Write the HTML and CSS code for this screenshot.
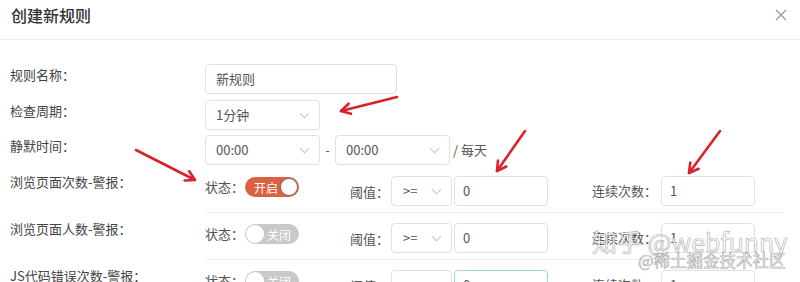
FILE: index.html
```html
<!DOCTYPE html>
<html lang="zh-CN">
  <head>
    <meta charset="UTF-8" />
    <meta name="viewport" content="width=device-width, initial-scale=1.0" />
    <title>创建新规则</title>
    <link rel="stylesheet" href="styles.css">
  </head>
  <body>
    <div class="modal">
      <div class="modal-header">
        <span class="modal-title">创建新规则</span>
        <span class="modal-close">
          <svg width="12" height="12" viewBox="0 0 12 12">
            <path d="M1 1 L11 11 M11 1 L1 11" stroke="#999" stroke-width="1.3" fill="none" />
          </svg>
        </span>
      </div>

      <div class="modal-body">
        <div class="form-row row-gap-6">
          <div class="form-label">规则名称：</div>
          <div class="input input-name">新规则</div>
        </div>

        <div class="form-row row-gap-5">
          <div class="form-label">检查周期：</div>
          <div class="select select-wide">1分钟<span class="chevron"></span></div>
        </div>

        <div class="form-row row-gap-6">
          <div class="form-label">静默时间：</div>
          <div class="select select-wide">00:00<span class="chevron"></span></div>
          <span class="dash">-</span>
          <div class="select select-wide">00:00<span class="chevron"></span></div>
          <span class="per-day">/ 每天</span>
        </div>

        <div class="alert-row">
          <div class="form-label">浏览页面次数-警报：</div>
          <div class="alert-content">
            <div class="status-group">
              <span class="sub-label">状态：</span>
              <span class="switch switch-on"><span class="switch-text">开启</span><span class="knob"></span></span>
            </div>
            <span class="sub-label thresh-label">阈值：</span>
            <div class="select select-op">&gt;=<span class="chevron"></span></div>
            <div class="input input-num">0</div>
            <span class="sub-label count-label">连续次数：</span>
            <div class="input input-num">1</div>
          </div>
        </div>

        <div class="alert-row">
          <div class="form-label">浏览页面人数-警报：</div>
          <div class="alert-content">
            <div class="status-group">
              <span class="sub-label">状态：</span>
              <span class="switch switch-off"><span class="knob"></span><span class="switch-text">关闭</span></span>
            </div>
            <span class="sub-label thresh-label">阈值：</span>
            <div class="select select-op">&gt;=<span class="chevron"></span></div>
            <div class="input input-num">0</div>
            <span class="sub-label count-label">连续次数：</span>
            <div class="input input-num">1</div>
          </div>
        </div>

        <div class="alert-row">
          <div class="form-label">JS代码错误次数-警报：</div>
          <div class="alert-content">
            <div class="status-group">
              <span class="sub-label">状态：</span>
              <span class="switch switch-off"><span class="knob"></span><span class="switch-text">关闭</span></span>
            </div>
            <span class="sub-label thresh-label">阈值：</span>
            <div class="select select-op">&gt;=<span class="chevron"></span></div>
            <div class="input input-num input-focus">0</div>
            <span class="sub-label count-label">连续次数：</span>
            <div class="input input-num">1</div>
          </div>
        </div>
      </div>
    </div>

    <!-- red annotation arrows drawn over the form -->
    <svg class="arrows" width="800" height="282" viewBox="0 0 800 282">
      <defs>
        <marker id="head" viewBox="0 0 10 10" refX="8" refY="5" markerWidth="5" markerHeight="5" orient="auto">
          <path d="M1 1 L8 5 L1 9" fill="none" stroke="#d8222c" stroke-width="2" stroke-linecap="round" stroke-linejoin="round" />
        </marker>
      </defs>
      <g stroke="#d8222c" stroke-width="2.6" stroke-linecap="round" fill="none" marker-end="url(#head)">
        <line x1="397" y1="97" x2="341" y2="111" />
        <line x1="136" y1="150" x2="195" y2="180" />
        <line x1="525" y1="131" x2="497" y2="171" />
        <line x1="720" y1="131" x2="689" y2="173" />
      </g>
    </svg>

    <div class="watermark">
      <div class="wm-main">知乎 @webfunny</div>
      <div class="wm-sub">@稀土掘金技术社区</div>
    </div>
  </body>
</html>
```

FILE: styles.css
```css
body {
  margin: 0;
  background: #fff;
  font-family: "Noto Sans CJK SC", "Noto Sans", sans-serif;
  font-size: 13px;
  color: #444;
  overflow: hidden;
}
.modal {
  width: 800px;
  height: 282px;
  overflow: hidden;
}
.modal-header {
  height: 40px;
  box-sizing: border-box;
  border-bottom: 1px solid #ececec;
  display: flex;
  justify-content: space-between;
  padding: 0 13px 0 11px;
}
.modal-title {
  font-size: 16px;
  font-weight: 500;
  line-height: 30px;
  color: #333;
}
.modal-close {
  display: flex;
  align-items: center;
  height: 30px;
}
.modal-body {
  padding: 24px 17px 0 10px;
}
.form-row {
  display: flex;
  align-items: flex-start;
}
.row-gap-6 {
  margin-bottom: 6px;
}
.row-gap-5 {
  margin-bottom: 5px;
}
.form-label {
  width: 195px;
  flex: none;
  line-height: 22px;
  color: #444;
}
.input,
.select {
  box-sizing: border-box;
  height: 30px;
  border: 1px solid #dfe1e5;
  border-radius: 4px;
  line-height: 28px;
  padding: 0 10px;
  color: #555;
  background: #fff;
  flex: none;
}
.input-name {
  width: 192px;
}
.select {
  position: relative;
}
.select-wide {
  width: 115px;
}
.chevron {
  position: absolute;
  right: 11px;
  top: 9px;
  width: 6px;
  height: 6px;
  border-right: 1px solid #c3c6cc;
  border-bottom: 1px solid #c3c6cc;
  transform: rotate(45deg);
}
.dash {
  width: 15px;
  text-align: center;
  line-height: 30px;
  color: #666;
}
.per-day {
  margin-left: 3px;
  line-height: 30px;
  color: #555;
}
.alert-row {
  display: flex;
  align-items: flex-start;
  margin-top: 5px;
}
.alert-row:first-of-type {
  margin-top: 0;
}
.alert-content {
  flex: 1;
  display: flex;
  align-items: center;
  padding: 5px 0 6px;
  border-bottom: 1px solid #efefef;
}
.status-group {
  width: 145px;
  flex: none;
  display: flex;
  align-items: center;
  align-self: flex-start;
  margin-top: 1px;
}
.sub-label {
  color: #555;
  line-height: 20px;
}
.switch {
  margin-left: 1px;
  width: 54px;
  height: 20px;
  border-radius: 10px;
  box-sizing: border-box;
  display: flex;
  align-items: center;
  justify-content: space-between;
  padding: 0 1px;
  font-size: 12px;
  color: #fff;
}
.switch-on {
  background: #dc6143;
  padding-left: 9px;
}
.switch-off {
  background: #c9c9c9;
  padding-right: 8px;
}
.knob {
  width: 18px;
  height: 18px;
  border-radius: 50%;
  background: #fff;
  box-sizing: border-box;
}
.switch-on .knob {
  border: 1px solid #8a6a66;
}
.thresh-label {
  width: 41px;
  flex: none;
  margin-top: 2px;
}
.select-op {
  width: 61px;
  margin-right: 2px;
  padding-left: 11px;
}
.input-num {
  width: 94px;
  padding-left: 8px;
}
.input-focus {
  border-color: #9fd2da;
}
.count-label {
  margin-left: 44px;
  width: 69px;
  flex: none;
}
.arrows {
  position: absolute;
  left: 0;
  top: 0;
  pointer-events: none;
}
.watermark {
  position: absolute;
  left: 592px;
  top: 226px;
  color: rgba(255, 255, 255, 0.8);
  -webkit-text-stroke: 0.7px rgba(110, 110, 110, 0.55);
  pointer-events: none;
}
.wm-main {
  font-size: 25px;
  line-height: 30px;
}
.wm-sub {
  font-size: 16.5px;
  line-height: 20px;
  margin-left: 46px;
  margin-top: -6px;
}
```
